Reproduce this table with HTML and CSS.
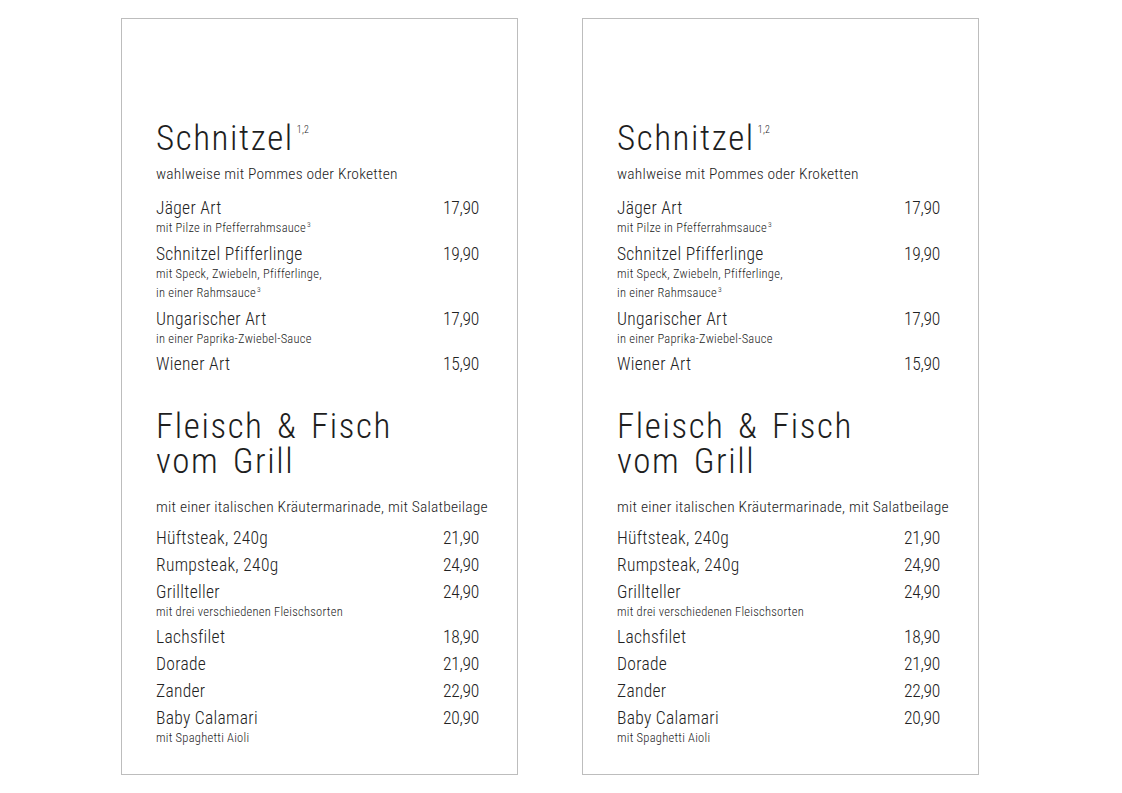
FILE: index.html
```html
<!DOCTYPE html>
<html lang="de">
<head>
<meta charset="utf-8">
<title>Speisekarte</title>
<link rel="stylesheet" href="styles.css">
</head>
<body>
<div class="sheet">
  <div class="panel">
    <section class="section">
      <h2 class="title">Schnitzel<sup class="title-sup">1,2</sup></h2>
      <p class="intro">wahlweise mit Pommes oder Kroketten</p>
      <div class="items">
        <div class="item">
          <div class="item-head"><span class="name">Jäger Art</span><span class="price">17,90</span></div>
          <div class="desc">mit Pilze in Pfefferrahmsauce<sup class="note">3</sup></div>
        </div>
        <div class="item">
          <div class="item-head"><span class="name">Schnitzel Pfifferlinge</span><span class="price">19,90</span></div>
          <div class="desc">mit Speck, Zwiebeln, Pfifferlinge,<br>in einer Rahmsauce<sup class="note">3</sup></div>
        </div>
        <div class="item">
          <div class="item-head"><span class="name">Ungarischer Art</span><span class="price">17,90</span></div>
          <div class="desc">in einer Paprika-Zwiebel-Sauce</div>
        </div>
        <div class="item">
          <div class="item-head"><span class="name">Wiener Art</span><span class="price">15,90</span></div>
        </div>
      </div>
    </section>
    <section class="section section-grill">
      <h2 class="title"><span class="title-line">Fleisch &amp; Fisch</span><span class="title-line">vom Grill</span></h2>
      <p class="intro">mit einer italischen Kräutermarinade, mit Salatbeilage</p>
      <div class="items">
        <div class="item">
          <div class="item-head"><span class="name">Hüftsteak, 240g</span><span class="price">21,90</span></div>
        </div>
        <div class="item">
          <div class="item-head"><span class="name">Rumpsteak, 240g</span><span class="price">24,90</span></div>
        </div>
        <div class="item">
          <div class="item-head"><span class="name">Grillteller</span><span class="price">24,90</span></div>
          <div class="desc">mit drei verschiedenen Fleischsorten</div>
        </div>
        <div class="item">
          <div class="item-head"><span class="name">Lachsfilet</span><span class="price">18,90</span></div>
        </div>
        <div class="item">
          <div class="item-head"><span class="name">Dorade</span><span class="price">21,90</span></div>
        </div>
        <div class="item">
          <div class="item-head"><span class="name">Zander</span><span class="price">22,90</span></div>
        </div>
        <div class="item">
          <div class="item-head"><span class="name">Baby Calamari</span><span class="price">20,90</span></div>
          <div class="desc">mit Spaghetti Aioli</div>
        </div>
      </div>
    </section>
  </div>

  <div class="panel">
    <section class="section">
      <h2 class="title">Schnitzel<sup class="title-sup">1,2</sup></h2>
      <p class="intro">wahlweise mit Pommes oder Kroketten</p>
      <div class="items">
        <div class="item">
          <div class="item-head"><span class="name">Jäger Art</span><span class="price">17,90</span></div>
          <div class="desc">mit Pilze in Pfefferrahmsauce<sup class="note">3</sup></div>
        </div>
        <div class="item">
          <div class="item-head"><span class="name">Schnitzel Pfifferlinge</span><span class="price">19,90</span></div>
          <div class="desc">mit Speck, Zwiebeln, Pfifferlinge,<br>in einer Rahmsauce<sup class="note">3</sup></div>
        </div>
        <div class="item">
          <div class="item-head"><span class="name">Ungarischer Art</span><span class="price">17,90</span></div>
          <div class="desc">in einer Paprika-Zwiebel-Sauce</div>
        </div>
        <div class="item">
          <div class="item-head"><span class="name">Wiener Art</span><span class="price">15,90</span></div>
        </div>
      </div>
    </section>
    <section class="section section-grill">
      <h2 class="title"><span class="title-line">Fleisch &amp; Fisch</span><span class="title-line">vom Grill</span></h2>
      <p class="intro">mit einer italischen Kräutermarinade, mit Salatbeilage</p>
      <div class="items">
        <div class="item">
          <div class="item-head"><span class="name">Hüftsteak, 240g</span><span class="price">21,90</span></div>
        </div>
        <div class="item">
          <div class="item-head"><span class="name">Rumpsteak, 240g</span><span class="price">24,90</span></div>
        </div>
        <div class="item">
          <div class="item-head"><span class="name">Grillteller</span><span class="price">24,90</span></div>
          <div class="desc">mit drei verschiedenen Fleischsorten</div>
        </div>
        <div class="item">
          <div class="item-head"><span class="name">Lachsfilet</span><span class="price">18,90</span></div>
        </div>
        <div class="item">
          <div class="item-head"><span class="name">Dorade</span><span class="price">21,90</span></div>
        </div>
        <div class="item">
          <div class="item-head"><span class="name">Zander</span><span class="price">22,90</span></div>
        </div>
        <div class="item">
          <div class="item-head"><span class="name">Baby Calamari</span><span class="price">20,90</span></div>
          <div class="desc">mit Spaghetti Aioli</div>
        </div>
      </div>
    </section>
  </div>
</div>
</body>
</html>
```
FILE: styles.css
```css
html, body {
  margin: 0;
  padding: 0;
  background: #ffffff;
}

body {
  font-family: "Roboto Condensed", "Roboto", "Liberation Sans", sans-serif;
  font-weight: 300;
  color: #222222;
}

.sheet {
  display: flex;
  gap: 64px;
  padding: 18px 0 0 121px;
}

.panel {
  box-sizing: border-box;
  width: 397px;
  height: 757px;
  border: 1px solid #bdbdbd;
  padding: 102px 38px 0 34px;
}

.section-grill {
  margin-top: 34px;
}

.title {
  margin: 0;
  font-size: 35px;
  line-height: 35px;
  font-weight: 300;
  letter-spacing: 1.6px;
  word-spacing: 4px;
  color: #1e1e1e;
}

.title-line {
  display: block;
  height: 35px;
}

.title-sup {
  font-size: 10px;
  line-height: 0;
  letter-spacing: 0.2px;
  vertical-align: 17px;
  margin-left: 3px;
}

.intro {
  margin: 8px 0 0;
  font-size: 15.5px;
  line-height: 20px;
  letter-spacing: 0.2px;
  white-space: nowrap;
}

.section-grill .intro {
  margin-top: 18px;
}

.items {
  margin-top: 13px;
  display: flex;
  flex-direction: column;
  gap: 5px;
}

.section-grill .items {
  margin-top: 9.5px;
}

.item-head {
  display: flex;
  justify-content: space-between;
  align-items: baseline;
  font-size: 17.5px;
  line-height: 22px;
  letter-spacing: 0.3px;
}

.price {
  letter-spacing: -0.3px;
}

.desc {
  margin-top: -1px;
  font-size: 12.5px;
  line-height: 19.5px;
  letter-spacing: 0.25px;
}

.note {
  font-size: 7.5px;
  line-height: 0;
  vertical-align: 5px;
  margin-left: 1px;
}
```
